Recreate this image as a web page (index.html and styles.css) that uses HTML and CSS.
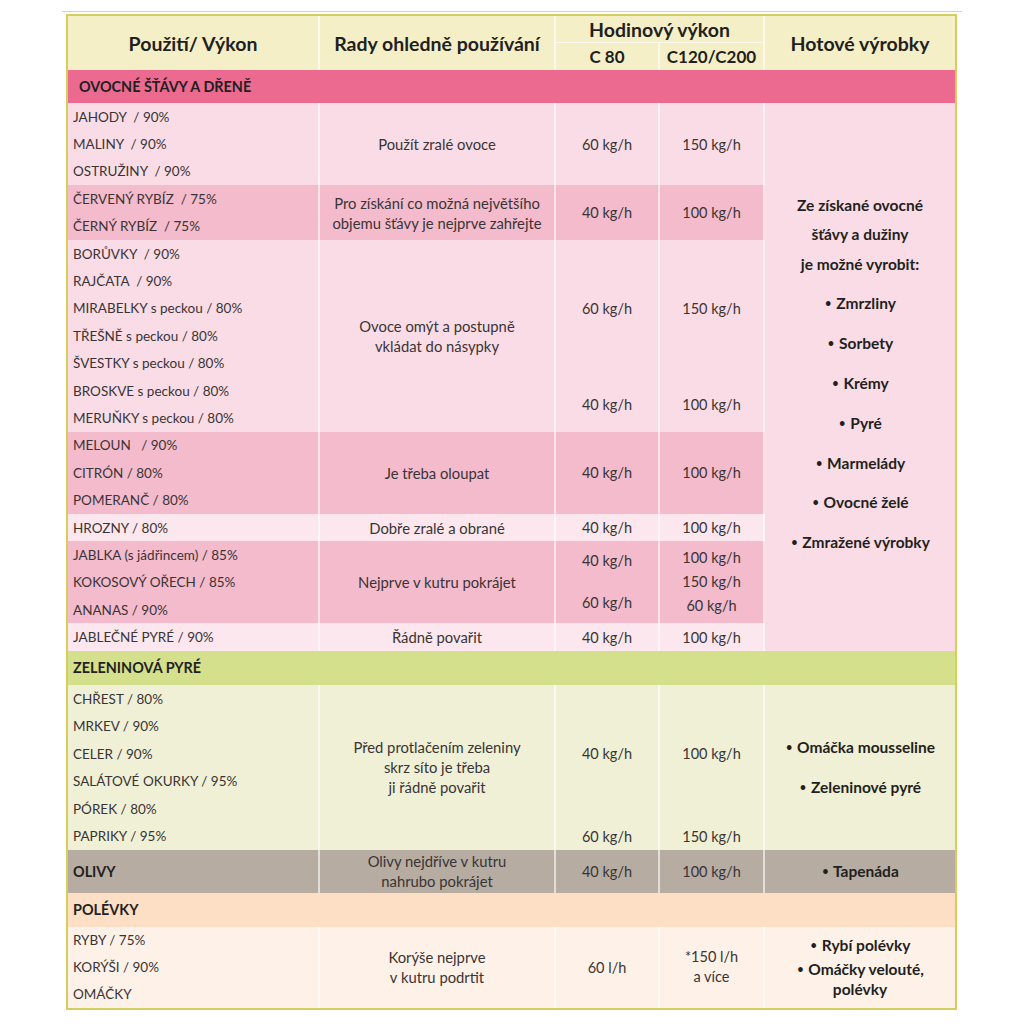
FILE: index.html
```html
<!DOCTYPE html>
<html lang="cs">
<head>
<meta charset="utf-8">
<title>Hodinový výkon</title>
<link rel="stylesheet" href="styles.css">
</head>
<body>
<div class="page">
  <div class="rule"></div>
  <div class="frame">
    <table class="tbl">
      <colgroup>
        <col class="c1"><col class="c2"><col class="c3"><col class="c4"><col class="c5">
      </colgroup>
      <thead>
        <tr class="h1">
          <th rowspan="2">Použití/ Výkon</th>
          <th rowspan="2">Rady ohledně používání</th>
          <th colspan="2" class="hsplit">Hodinový výkon</th>
          <th rowspan="2" class="last">Hotové výrobky</th>
        </tr>
        <tr class="h2">
          <th class="sub">C 80</th>
          <th class="sub">C120/C200</th>
        </tr>
      </thead>
      <tbody>
        <tr class="sec pink"><td colspan="5">OVOCNÉ ŠŤÁVY A DŘENĚ</td></tr>

        <tr class="r l">
          <td class="it">JAHODY&nbsp; / 90%</td>
          <td rowspan="3" class="tip">Použít zralé ovoce</td>
          <td rowspan="3" class="val">60 kg/h</td>
          <td rowspan="3" class="val">150 kg/h</td>
          <td rowspan="20" class="prod last">
            <div class="fruit">
              <p class="intro">Ze získané ovocné</p>
              <p class="intro">šťávy a dužiny</p>
              <p class="intro">je možné vyrobit:</p>
              <div class="bul">
                <p><span class="dot">•</span> Zmrzliny</p>
                <p><span class="dot">•</span> Sorbety</p>
                <p><span class="dot">•</span> Krémy</p>
                <p><span class="dot">•</span> Pyré</p>
                <p><span class="dot">•</span> Marmelády</p>
                <p><span class="dot">•</span> Ovocné želé</p>
                <p><span class="dot">•</span> Zmražené výrobky</p>
              </div>
            </div>
          </td>
        </tr>
        <tr class="r l"><td class="it">MALINY&nbsp; / 90%</td></tr>
        <tr class="r l"><td class="it">OSTRUŽINY&nbsp; / 90%</td></tr>

        <tr class="r d">
          <td class="it">ČERVENÝ RYBÍZ&nbsp; / 75%</td>
          <td rowspan="2" class="tip">Pro získání co možná největšího<br>objemu šťávy je nejprve zahřejte</td>
          <td rowspan="2" class="val">40 kg/h</td>
          <td rowspan="2" class="val">100 kg/h</td>
        </tr>
        <tr class="r d"><td class="it">ČERNÝ RYBÍZ&nbsp; / 75%</td></tr>

        <tr class="r l">
          <td class="it">BORŮVKY&nbsp; / 90%</td>
          <td rowspan="7" class="tip">Ovoce omýt a postupně<br>vkládat do násypky</td>
          <td rowspan="5" class="val">60 kg/h</td>
          <td rowspan="5" class="val">150 kg/h</td>
        </tr>
        <tr class="r l"><td class="it">RAJČATA&nbsp; / 90%</td></tr>
        <tr class="r l"><td class="it">MIRABELKY s peckou / 80%</td></tr>
        <tr class="r l"><td class="it">TŘEŠNĚ s peckou / 80%</td></tr>
        <tr class="r l"><td class="it">ŠVESTKY s peckou / 80%</td></tr>
        <tr class="r l">
          <td class="it">BROSKVE s peckou / 80%</td>
          <td rowspan="2" class="val">40 kg/h</td>
          <td rowspan="2" class="val">100 kg/h</td>
        </tr>
        <tr class="r l"><td class="it">MERUŇKY s peckou / 80%</td></tr>

        <tr class="r d">
          <td class="it">MELOUN&nbsp;&nbsp; / 90%</td>
          <td rowspan="3" class="tip">Je třeba oloupat</td>
          <td rowspan="3" class="val">40 kg/h</td>
          <td rowspan="3" class="val">100 kg/h</td>
        </tr>
        <tr class="r d"><td class="it">CITRÓN / 80%</td></tr>
        <tr class="r d"><td class="it">POMERANČ / 80%</td></tr>

        <tr class="r x">
          <td class="it">HROZNY / 80%</td>
          <td class="tip">Dobře zralé a obrané</td>
          <td class="val">40 kg/h</td>
          <td class="val">100 kg/h</td>
        </tr>

        <tr class="r d">
          <td class="it">JABLKA (s jádřincem) / 85%</td>
          <td rowspan="3" class="tip">Nejprve v kutru pokrájet</td>
          <td rowspan="3" class="val"><div class="split"><span>40 kg/h</span><span>60 kg/h</span></div></td>
          <td rowspan="3" class="val stack">100 kg/h<br>150 kg/h<br>60 kg/h</td>
        </tr>
        <tr class="r d"><td class="it">KOKOSOVÝ OŘECH / 85%</td></tr>
        <tr class="r d"><td class="it">ANANAS / 90%</td></tr>

        <tr class="r x">
          <td class="it">JABLEČNÉ PYRÉ / 90%</td>
          <td class="tip">Řádně povařit</td>
          <td class="val">40 kg/h</td>
          <td class="val">100 kg/h</td>
        </tr>

        <tr class="sec green"><td colspan="5">ZELENINOVÁ PYRÉ</td></tr>

        <tr class="r v">
          <td class="it">CHŘEST / 80%</td>
          <td rowspan="6" class="tip">Před protlačením zeleniny<br>skrz síto je třeba<br>ji řádně povařit</td>
          <td rowspan="5" class="val">40 kg/h</td>
          <td rowspan="5" class="val">100 kg/h</td>
          <td rowspan="6" class="prod last">
            <div class="veg">
              <p><span class="dot">•</span> Omáčka mousseline</p>
              <p><span class="dot">•</span> Zeleninové pyré</p>
            </div>
          </td>
        </tr>
        <tr class="r v"><td class="it">MRKEV / 90%</td></tr>
        <tr class="r v"><td class="it">CELER / 90%</td></tr>
        <tr class="r v"><td class="it">SALÁTOVÉ OKURKY / 95%</td></tr>
        <tr class="r v"><td class="it">PÓREK / 80%</td></tr>
        <tr class="r v">
          <td class="it">PAPRIKY / 95%</td>
          <td class="val">60 kg/h</td>
          <td class="val">150 kg/h</td>
        </tr>

        <tr class="olive">
          <td class="it bold">OLIVY</td>
          <td class="tip">Olivy nejdříve v kutru<br>nahrubo pokrájet</td>
          <td class="val">40 kg/h</td>
          <td class="val">100 kg/h</td>
          <td class="prod last"><span class="dot">•</span> Tapenáda</td>
        </tr>

        <tr class="sec peach"><td colspan="5">POLÉVKY</td></tr>

        <tr class="r s">
          <td class="it">RYBY / 75%</td>
          <td rowspan="3" class="tip">Korýše nejprve<br>v kutru podrtit</td>
          <td rowspan="3" class="val">60 l/h</td>
          <td rowspan="3" class="val lh20">*150 l/h<br>a více</td>
          <td rowspan="3" class="prod last">
            <div class="soup">
              <p><span class="dot">•</span> Rybí polévky</p>
              <p><span class="dot">•</span> Omáčky velouté,<br>polévky</p>
            </div>
          </td>
        </tr>
        <tr class="r s"><td class="it">KORÝŠI / 90%</td></tr>
        <tr class="r s"><td class="it">OMÁČKY</td></tr>
      </tbody>
    </table>
  </div>
</div>
</body>
</html>
```

FILE: styles.css
```css
body {
  margin: 0;
  background: #ffffff;
  font-family: Lato, "Open Sans", sans-serif;
  color: #3a3435;
}

.page {
  padding-top: 11px;
}

.rule {
  margin-left: 62px;
  width: 900px;
  height: 1px;
  background: #d2d0cc;
  margin-bottom: 2px;
}

.frame {
  margin-left: 66px;
  width: 887px;
  border: 2px solid #d6cd5e;
}

.tbl {
  width: 887px;
  table-layout: fixed;
  border-collapse: separate;
  border-spacing: 0;
}

.c1 { width: 252px; }
.c2 { width: 236px; }
.c3 { width: 104px; }
.c4 { width: 105px; }
.c5 { width: 190px; }

.tbl th,
.tbl td {
  padding: 0;
  vertical-align: middle;
  border-right: 2px solid rgba(255, 255, 255, 0.6);
}

.tbl th.last,
.tbl td.last,
.sec td {
  border-right: none;
}

/* header */
.tbl th {
  background: #f5efc8;
  color: #231f20;
  font-weight: 700;
  font-size: 19.5px;
  text-align: center;
  white-space: nowrap;
}

.tbl th.sub {
  font-size: 17px;
}

.h1 { height: 27px; }
.h2 { height: 27px; }

.hsplit {
  border-bottom: 1px solid rgba(255, 255, 255, 0.7);
}

/* section bars */
.sec td {
  font-weight: 700;
  font-size: 14.4px;
  color: #231f20;
  padding-left: 11px;
  height: 33px;
}

.sec.pink td { background: #ec6a90; }
.sec.green td { background: #d5e08c; height: 34px; padding-left: 5px; }
.sec.peach td { background: #fddfc6; height: 34px; padding-left: 5px; }

/* ordinary rows */
.r { height: 27.4px; }
.r.v { height: 27.5px; }
.r.s { height: 27px; }

.l > td { background: #f9dce5; }
.d > td { background: #f3bbcb; }
.x > td { background: #fbe7ed; }
.v > td { background: #eff0d6; }
.s > td { background: #fdf1e8; }
.olive > td { background: #b6aca1; height: 43px; }

.it {
  font-size: 13.5px;
  padding-left: 5px !important;
  white-space: nowrap;
}

.it.bold {
  font-weight: 700;
  font-size: 14.4px;
  color: #231f20;
}

.tip {
  font-size: 14.8px;
  line-height: 20px;
  text-align: center;
  white-space: nowrap;
}

.val {
  font-size: 14.5px;
  text-align: center;
}

.stack { line-height: 24px; }
.lh20 { line-height: 20px; }

.split {
  display: flex;
  flex-direction: column;
  justify-content: space-between;
  height: 82px;
  box-sizing: border-box;
  padding: 12px 0;
  line-height: 16px;
}

.prod {
  font-weight: 700;
  font-size: 15.5px;
  color: #231f20;
  text-align: center;
  white-space: nowrap;
}

.prod p { margin: 0; }

.dot {
  font-family: "DejaVu Sans", sans-serif;
  font-size: 0.85em;
  line-height: 0;
}

.fruit .intro { line-height: 29.5px; }
.fruit .bul { margin-top: 5px; }
.fruit .bul p { line-height: 39.8px; }

.veg p { line-height: 40px; }

.soup p { line-height: 20px; }
.soup p + p { margin-top: 4px; }
```
